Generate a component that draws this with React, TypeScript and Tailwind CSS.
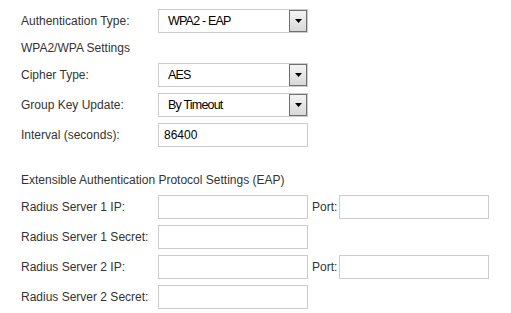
const label = "text-[12px] text-[#333] leading-none";

function Select({ value }: { value: string }) {
  return (
    <div className="relative w-[150px] h-[24px] border border-[#cccccc] bg-white flex items-center">
      <span className="pl-[9px] text-[12.5px] tracking-[-0.8px] text-black leading-none">
        {value}
      </span>
      <div className="absolute right-0 top-0 w-[18px] h-[22px] border border-[#707070] bg-gradient-to-b from-[#f4f4f4] to-[#d8d8d8] flex items-center justify-center">
        <svg width="7" height="4" viewBox="0 0 7 4">
          <path d="M0 0h7L3.5 4z" fill="#000" />
        </svg>
      </div>
    </div>
  );
}

function Input({ value = "" }: { value?: string }) {
  return (
    <div className="w-[150px] h-[24px] border border-[#cccccc] bg-white flex items-center pl-[5px] text-[12px] text-black leading-none">
      {value}
    </div>
  );
}

function Row({ name, children }: { name: string; children: React.ReactNode }) {
  return (
    <div className="h-[30px] flex items-center">
      <div className={`w-[137px] ${label}`}>{name}</div>
      {children}
    </div>
  );
}

function PortRow({ name }: { name: string }) {
  return (
    <Row name={name}>
      <Input />
      <span className={`ml-[4px] w-[27px] ${label}`}>Port:</span>
      <Input />
    </Row>
  );
}

export default function App() {
  return (
    <div className="w-[511px] h-[313px] bg-white pt-[6px] pl-[21px] font-['Liberation_Sans',Arial,sans-serif] overflow-hidden">
      <Row name="Authentication Type:">
        <Select value="WPA2 - EAP" />
      </Row>
      <div className={`h-[24px] flex items-center ${label}`}>WPA2/WPA Settings</div>
      <Row name="Cipher Type:">
        <Select value="AES" />
      </Row>
      <Row name="Group Key Update:">
        <Select value="By Timeout" />
      </Row>
      <Row name="Interval (seconds):">
        <Input value="86400" />
      </Row>
      <div className="h-[18px]" />
      <div className={`h-[24px] flex items-center ${label}`}>
        Extensible Authentication Protocol Settings (EAP)
      </div>
      <PortRow name="Radius Server 1 IP:" />
      <Row name="Radius Server 1 Secret:">
        <Input />
      </Row>
      <PortRow name="Radius Server 2 IP:" />
      <Row name="Radius Server 2 Secret:">
        <Input />
      </Row>
    </div>
  );
}
